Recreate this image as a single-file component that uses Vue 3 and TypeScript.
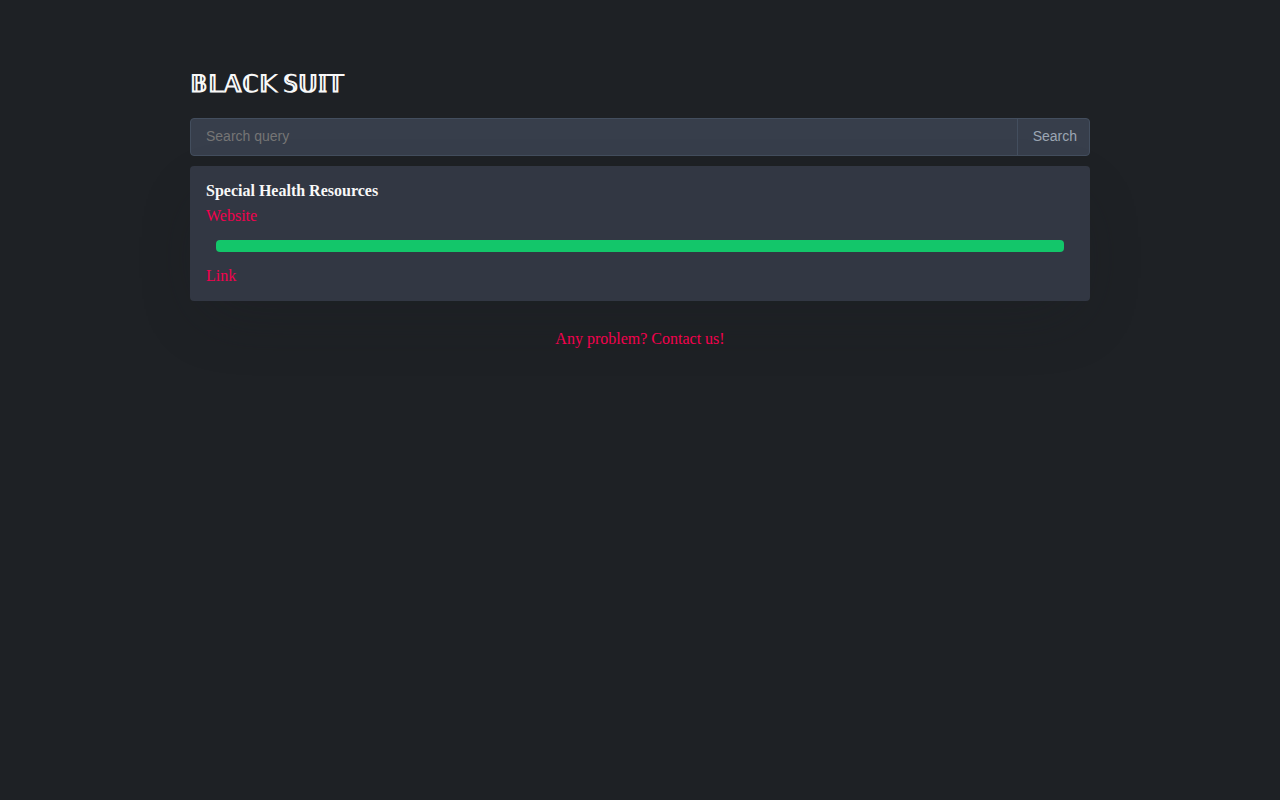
<script setup lang="ts">
import { ref } from 'vue'

interface Entry {
  title: string
  progress: number
}

const query = ref('')
const entries: Entry[] = [{ title: 'Special Health Resources', progress: 100 }]
</script>

<template>
  <main class="page">
    <h1 class="brand">𝔹𝕃𝔸ℂ𝕂 𝕊𝕌𝕀𝕋</h1>
    <form class="search" @submit.prevent>
      <input v-model="query" class="query" type="text" placeholder="Search query" aria-label="Search query" />
      <button class="submit" type="submit">Search</button>
    </form>
    <article v-for="entry in entries" :key="entry.title" class="card">
      <h2 class="title">{{ entry.title }}</h2>
      <a class="link" href="#">Website</a>
      <div class="track">
        <div class="bar" :style="{ width: entry.progress + '%' }"></div>
      </div>
      <a class="link" href="#">Link</a>
    </article>
    <footer class="contact"><a class="link" href="#">Any problem? Contact us!</a></footer>
  </main>
</template>

<style>
body {
  margin: 0;
  background: #1e2125;
}
</style>

<style scoped>
.page {
  box-sizing: border-box;
  max-width: 932px;
  margin: 0 auto;
  padding: 64px 16px 32px;
  color: #f8f8f8;
  font: 16px/25px "Liberation Serif", serif;
}

.brand {
  margin: 0 0 14px;
  font-size: 24px;
  line-height: 40px;
  font-weight: 700;
}

.search {
  display: flex;
  height: 38px;
  box-sizing: border-box;
  margin-bottom: 10px;
  overflow: hidden;
  background: #373e4b;
  border: 1px solid #434e5e;
  border-radius: 4px;
}

.query,
.submit {
  box-sizing: border-box;
  margin: 0;
  border: 0;
  outline: 0;
  background: transparent;
  font: 14px/18px "Liberation Sans", sans-serif;
}

.query {
  flex: 1;
  min-width: 0;
  padding: 0 15px 2px;
  color: #f8f8f8;
}

.query::placeholder {
  color: #757575;
}

.submit {
  padding: 0 12px 2px 15px;
  border-left: 1px solid #434e5e;
  color: #9ca6b3;
  cursor: pointer;
}

.card {
  padding: 12px 16px 13px;
  background: #323743;
  border-radius: 4px;
  box-shadow: 0 24px 64px -16px rgba(28, 30, 34, 0.3);
}

.title {
  margin: 0;
  font-size: 16px;
  line-height: 25px;
}

.card .link {
  display: block;
  width: fit-content;
}

.link {
  color: #f3004e;
  text-decoration: none;
}

.track {
  margin: 12px 10px 11px;
}

.bar {
  height: 12px;
  background: #13c66a;
  border-radius: 4px;
}

.contact {
  margin-top: 25px;
  text-align: center;
}
</style>
